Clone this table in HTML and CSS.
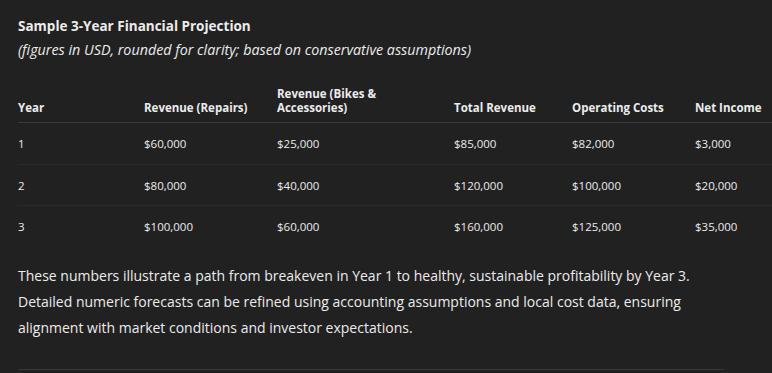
FILE: index.html
```html
<!DOCTYPE html>
<html>
<head>
<meta charset="utf-8">
<link rel="stylesheet" href="styles.css">
</head>
<body>
<div class="page">
  <h3 class="title">Sample 3-Year Financial Projection</h3>
  <p class="subtitle"><em>(figures in USD, rounded for clarity; based on conservative assumptions)</em></p>
  <table class="fin">
    <colgroup>
      <col class="c1"><col class="c2"><col class="c3"><col class="c4"><col class="c5"><col class="c6">
    </colgroup>
    <thead>
      <tr>
        <th>Year</th>
        <th>Revenue (Repairs)</th>
        <th>Revenue (Bikes &amp;<br>Accessories)</th>
        <th>Total Revenue</th>
        <th>Operating Costs</th>
        <th>Net Income</th>
      </tr>
    </thead>
    <tbody>
      <tr><td>1</td><td>$60,000</td><td>$25,000</td><td>$85,000</td><td>$82,000</td><td>$3,000</td></tr>
      <tr><td>2</td><td>$80,000</td><td>$40,000</td><td>$120,000</td><td>$100,000</td><td>$20,000</td></tr>
      <tr><td>3</td><td>$100,000</td><td>$60,000</td><td>$160,000</td><td>$125,000</td><td>$35,000</td></tr>
    </tbody>
  </table>
  <p class="body">These numbers illustrate a path from breakeven in Year 1 to healthy, sustainable profitability by Year 3. Detailed numeric forecasts can be refined using accounting assumptions and local cost data, ensuring alignment with market conditions and investor expectations.</p>
  <hr class="rule">
</div>
</body>
</html>
```
FILE: styles.css
```css
html, body {
  margin: 0;
  padding: 0;
  background: #212121;
}
body {
  font-family: "Open Sans", "Noto Sans", sans-serif;
  color: #ececec;
  overflow: hidden;
}
.page {
  padding: 16px 0 0 18px;
  width: 754px;
}
.title {
  margin: 0;
  font-size: 13.5px;
  line-height: 20px;
  font-weight: 700;
}
.subtitle {
  margin: 3px 0 0;
  font-size: 14.3px;
  line-height: 22px;
}
.fin {
  margin-top: 26px;
  border-collapse: collapse;
  table-layout: fixed;
  width: 760px;
  font-size: 11.5px;
}
.c1 { width: 126px; }
.c2 { width: 133px; }
.c3 { width: 177px; }
.c4 { width: 118px; }
.c5 { width: 123px; }
.c6 { width: 83px; }
.fin th {
  text-align: left;
  font-weight: 700;
  vertical-align: bottom;
  padding: 0 0 7px;
  line-height: 14px;
  border-bottom: 1px solid #3a3a3a;
}
.fin td {
  padding: 2px 0 0;
  height: 38.5px;
  line-height: 16px;
  vertical-align: middle;
  border-bottom: 1px solid #2a2a2a;
}
.fin tbody tr:last-child td {
  border-bottom: none;
}
.body {
  margin: 16px 0 0;
  width: 684px;
  font-size: 14px;
  line-height: 26px;
}
.rule {
  margin: 28px 0 0;
  width: 706px;
  border: none;
  border-top: 1px solid #3a3a3a;
}
```
